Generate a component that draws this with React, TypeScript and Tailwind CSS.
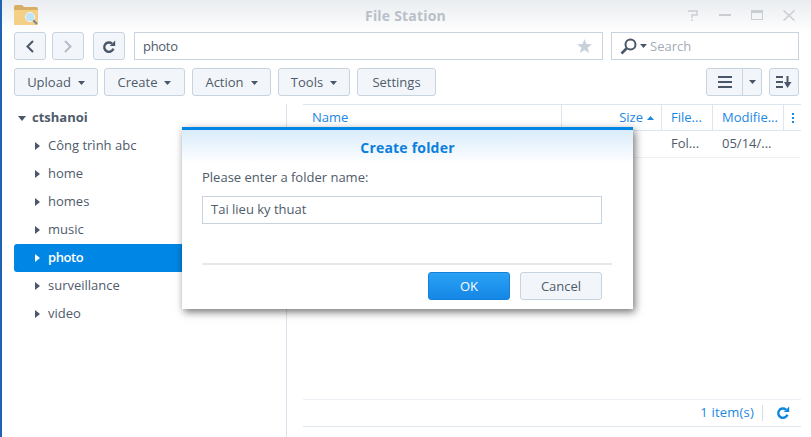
import React from "react";

const Caret = ({ c = "#4a5768", up = false, w = 7, h = 4 }: { c?: string; up?: boolean; w?: number; h?: number }) => (
  <svg width={w} height={h} viewBox="0 0 7 4" preserveAspectRatio="none" className="shrink-0">
    <path d={up ? "M0 4 L3.5 0 L7 4 Z" : "M0 0 L7 0 L3.5 4 Z"} fill={c} />
  </svg>
);

const Btn = ({ w, children }: { w: string; children: React.ReactNode }) => (
  <div className={`${w} h-7 flex items-center justify-center gap-[7px] pt-px rounded-[3px] border border-[#c8d3e0] bg-[#f2f6fa] text-[13px] text-[#4f5b6b]`}>
    {children}
  </div>
);

const Row = ({ label, active }: { label: string; active?: boolean }) => (
  <div className={`h-7 flex items-center pl-[21px] rounded-l-[3px] text-[13px] ${active ? "bg-[#0086e5] text-white font-semibold tracking-[-0.4px]" : "text-[#4f5b6b]"}`}>
    <svg width="5" height="8" viewBox="0 0 5 8" className="mr-2">
      <path d="M0 0 L5 4 L0 8 Z" fill={active ? "#ffffff" : "#4a5768"} />
    </svg>
    {label}
  </div>
);

const Refresh = ({ c }: { c: string }) => (
  <svg width="14" height="14" viewBox="0 0 14 14" fill="none">
    <path d="M11.4 8.6 A4.7 4.7 0 1 1 10 3.6" stroke={c} strokeWidth="2.4" />
    <path d="M7.8 6 L13.2 6 L13.2 0.6 Z" fill={c} />
  </svg>
);

export default function App() {
  return (
    <div className="relative w-[811px] h-[437px] overflow-hidden bg-white border-l-2 border-[#2062b4]" style={{ fontFamily: '"Open Sans", "Noto Sans", sans-serif' }}>
      {/* Title bar */}
      <div className="h-8 flex items-center bg-gradient-to-b from-[#e9ecf0] to-white relative">
        <svg width="24" height="20" viewBox="0 0 24 20" className="ml-3 mb-[2px]">
          <path d="M0 2 Q0 0 2 0 H8 L10 2 H22 Q24 2 24 4 V6 H0 Z" fill="#d8ae66" />
          <path d="M0 5 H24 V19 Q24 20 23 20 H1 Q0 20 0 19 Z" fill="#f4cf86" />
          <circle cx="16" cy="12" r="4.6" fill="#bfe4f8" stroke="#eaf5fb" strokeWidth="1" />
          <path d="M19.2 15.2 L23 19" stroke="#7f8790" strokeWidth="2" />
        </svg>
        <div className="absolute left-0 right-0 top-[5px] text-center text-[14px] tracking-[0.2px] font-bold text-[#b9c0c9] pr-[2px]">File Station</div>
        <div className="ml-auto flex items-center gap-5 pr-[16px] mb-[2px]">
          <svg width="12" height="11" viewBox="0 0 12 11" fill="none" stroke="#c9ced5" strokeWidth="1.4">
            <path d="M1 1 H10 V5 H5 V8 M5 9.2 V11" />
          </svg>
          <div className="w-3 h-[2px] bg-[#c9ced5]" />
          <div className="w-3 h-[10px] border border-[#c9ced5] border-t-[3px]" />
          <svg width="12" height="11" viewBox="0 0 12 11" stroke="#c9ced5" strokeWidth="1.5">
            <path d="M0.5 0.5 L11.5 10.5 M11.5 0.5 L0.5 10.5" />
          </svg>
        </div>
      </div>

      {/* Nav row */}
      <div className="h-7 flex pl-3 pr-[12px]">
        <Btn w="w-8">
          <svg width="8" height="13" viewBox="0 0 8 13" fill="none" stroke="#4a5768" strokeWidth="2"><path d="M7 1 L1.5 6.5 L7 12" /></svg>
        </Btn>
        <div className="ml-[6px]">
          <Btn w="w-8">
            <svg width="8" height="13" viewBox="0 0 8 13" fill="none" stroke="#b4bcc7" strokeWidth="2"><path d="M1 1 L6.5 6.5 L1 12" /></svg>
          </Btn>
        </div>
        <div className="ml-[9px]">
          <Btn w="w-8"><Refresh c="#4a5768" /></Btn>
        </div>
        <div className="ml-[9px] w-[469px] h-7 border border-[#c8d3e0] flex items-center pl-2 pr-[10px] text-[13px] text-[#4f5b6b]">
          <span className="pt-px tracking-[-0.3px]">photo</span>
          <svg width="15" height="14" viewBox="0 0 16 15" className="ml-auto">
            <path d="M8 0 L10 5.3 L16 5.7 L11.3 9.3 L13 15 L8 11.8 L3 15 L4.7 9.3 L0 5.7 L6 5.3 Z" fill="#c8d0dc" />
          </svg>
        </div>
        <div className="ml-2 w-[188px] h-7 border border-[#c8d3e0] flex items-center pl-2 text-[13px] text-[#a3acb8]">
          <svg width="17" height="17" viewBox="0 0 17 17" fill="none" stroke="#4a5768" className="mr-[3px]">
            <circle cx="10.5" cy="6.5" r="5" strokeWidth="2" />
            <path d="M6.5 10.5 L1.5 15.5" strokeWidth="2.6" />
          </svg>
          <Caret />
          <span className="ml-[3px] pt-px">Search</span>
        </div>
      </div>

      {/* Action row */}
      <div className="h-7 mt-2 flex pl-3 pr-[12px]">
        <Btn w="w-[84px]">Upload <Caret /></Btn>
        <div className="ml-[6px]"><Btn w="w-[81px]">Create <Caret /></Btn></div>
        <div className="ml-[7px]"><Btn w="w-[79px]">Action <Caret /></Btn></div>
        <div className="ml-[7px]"><Btn w="w-[72px]">Tools <Caret /></Btn></div>
        <div className="ml-[7px]"><Btn w="w-[79px]">Settings</Btn></div>
        <div className="ml-auto flex h-7 w-[56px] rounded-[3px] border border-[#c8d3e0] bg-[#f2f6fa]">
          <div className="w-[36px] flex items-center justify-center border-r border-[#c8d3e0]">
            <div className="w-[14px] flex flex-col gap-[3px]">
              <div className="h-[2px] bg-[#4a5768]" />
              <div className="h-[2px] bg-[#4a5768]" />
              <div className="h-[2px] bg-[#4a5768]" />
            </div>
          </div>
          <div className="flex-1 flex items-center justify-center"><Caret /></div>
        </div>
        <div className="ml-[7px] w-[30px] h-7 rounded-[3px] border border-[#c8d3e0] bg-[#f2f6fa] flex items-center justify-center">
          <svg width="16" height="12" viewBox="0 0 16 12" fill="#4a5768">
            <rect x="0" y="0" width="7" height="2" /><rect x="0" y="5" width="7" height="2" /><rect x="0" y="10" width="7" height="2" />
            <rect x="10.5" y="0" width="2" height="7" /><path d="M8 6 H15.5 L11.5 12 Z" />
          </svg>
        </div>
      </div>

      {/* Main */}
      <div className="flex mt-2 h-[333px]">
        <div className="w-[285px] border-r border-[#dde3ea] pl-3">
          <div className="h-[28px] flex items-center pl-[4px] text-[13px] font-bold text-[#4f5b6b]">
            <span className="mr-[6px] flex"><Caret w={8} h={5} /></span>ctshanoi
          </div>
          <Row label="Công trình abc" />
          <Row label="home" />
          <Row label="homes" />
          <Row label="music" />
          <Row label="photo" active />
          <Row label="surveillance" />
          <Row label="video" />
        </div>
        <div className="flex-1 pl-4 pr-[10px] flex flex-col">
          <div className="h-[27px] border-y border-[#dce6f1] flex items-center text-[13px] text-[#1b87e5]">
            <div className="w-[258px] pl-[9px]">Name</div>
            <div className="w-[100px] h-full border-l border-[#dce6f1] flex items-center justify-end gap-[4px] pr-[7px]">Size <Caret c="#1b87e5" up /></div>
            <div className="w-[51px] h-full border-l border-[#dce6f1] flex items-center pl-[9px]">File...</div>
            <div className="w-[71px] h-full border-l border-[#dce6f1] flex items-center pl-[9px] whitespace-nowrap">Modifie...</div>
            <div className="flex-1 h-full border-l border-[#dce6f1] flex flex-col items-center justify-center gap-[2px]">
              <div className="w-[2px] h-[2px] bg-[#1b87e5]" />
              <div className="w-[2px] h-[2px] bg-[#1b87e5]" />
              <div className="w-[2px] h-[2px] bg-[#1b87e5]" />
            </div>
          </div>
          <div className="h-[27px] border-b border-[#eef1f5] flex items-center text-[13px] text-[#4f5b6b]">
            <div className="w-[359px]" />
            <div className="w-[51px] pl-[9px]">Fol...</div>
            <div className="pl-[9px]">05/14/...</div>
          </div>
          <div className="flex-1" />
          <div className="h-[28px] border-y border-[#dfe6ee] border-t-[#eceff3] flex items-center justify-end text-[13px] text-[#1b87e5] mb-[10px]">
            <span className="tracking-[0.2px]">1 item(s)</span>
            <div className="w-px h-4 bg-[#d5dfe9] ml-[8px] mr-[13px]" />
            <span className="mr-[11px] flex"><Refresh c="#0d86e0" /></span>
          </div>
        </div>
      </div>

      {/* Modal */}
      <div className="absolute left-[180px] top-[127px] w-[451px] h-[182px] bg-white border-t-[3px] border-[#0086e5] shadow-[2px_3px_8px_rgba(0,0,0,0.55)] flex flex-col">
        <div className="h-[34px] flex items-center justify-center bg-gradient-to-b from-[#d9ecfb] to-white text-[14px] tracking-[0.2px] font-bold text-[#0b7fdc]">Create folder</div>
        <div className="pl-5 pt-[4px] flex-1 flex flex-col">
          <div className="text-[13px] leading-[18px] text-[#4f5b6b]">Please enter a folder name:</div>
          <div className="mt-[10px] w-[400px] h-7 border border-[#c8d3e0] flex items-center pl-2 text-[13px] text-[#4f5b6b]">Tai lieu ky thuat</div>
          <div className="mt-[39px] h-[2px] w-[410px] bg-[#e6e8eb]" />
          <div className="mt-[7px] w-[400px] flex justify-end gap-[10px]">
            <div className="w-[82px] h-7 pt-px rounded-[3px] border border-[#1580d8] bg-gradient-to-b from-[#2ba2f5] to-[#1486e6] text-white text-[13px] flex items-center justify-center">OK</div>
            <div className="w-[82px] h-7 pt-px rounded-[3px] border border-[#c8d3e0] bg-[#f2f6fa] text-[#4f5b6b] text-[13px] flex items-center justify-center">Cancel</div>
          </div>
        </div>
      </div>
    </div>
  );
}
